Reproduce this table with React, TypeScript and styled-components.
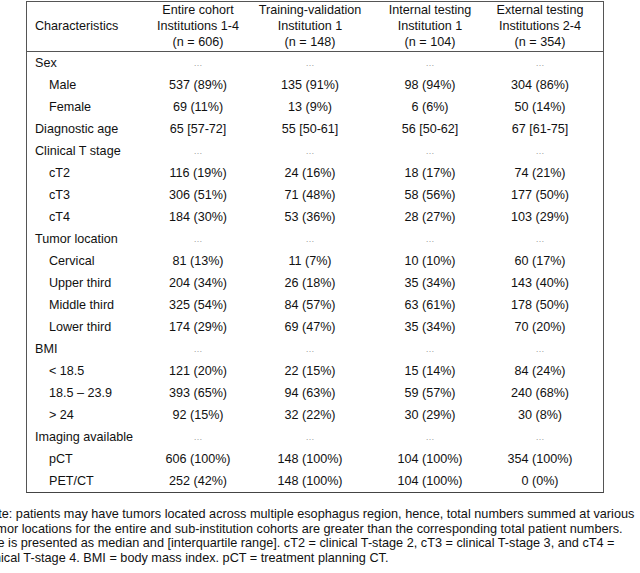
import React from 'react';
import styled, { createGlobalStyle } from 'styled-components';

const GlobalStyle = createGlobalStyle`
  html, body {
    margin: 0;
    padding: 0;
    background: #ffffff;
    overflow: hidden;
  }
  body {
    font-family: "Liberation Sans", Arial, sans-serif;
    color: #111;
  }
`;

interface RowData {
  label: string;
  sub?: boolean;
  values?: string[];
}

const rows: RowData[] = [
  { label: 'Sex' },
  { label: 'Male', sub: true, values: ['537 (89%)', '135 (91%)', '98 (94%)', '304 (86%)'] },
  { label: 'Female', sub: true, values: ['69 (11%)', '13 (9%)', '6 (6%)', '50 (14%)'] },
  { label: 'Diagnostic age', values: ['65 [57-72]', '55 [50-61]', '56 [50-62]', '67 [61-75]'] },
  { label: 'Clinical T stage' },
  { label: 'cT2', sub: true, values: ['116 (19%)', '24 (16%)', '18 (17%)', '74 (21%)'] },
  { label: 'cT3', sub: true, values: ['306 (51%)', '71 (48%)', '58 (56%)', '177 (50%)'] },
  { label: 'cT4', sub: true, values: ['184 (30%)', '53 (36%)', '28 (27%)', '103 (29%)'] },
  { label: 'Tumor location' },
  { label: 'Cervical', sub: true, values: ['81 (13%)', '11 (7%)', '10 (10%)', '60 (17%)'] },
  { label: 'Upper third', sub: true, values: ['204 (34%)', '26 (18%)', '35 (34%)', '143 (40%)'] },
  { label: 'Middle third', sub: true, values: ['325 (54%)', '84 (57%)', '63 (61%)', '178 (50%)'] },
  { label: 'Lower third', sub: true, values: ['174 (29%)', '69 (47%)', '35 (34%)', '70 (20%)'] },
  { label: 'BMI' },
  { label: '< 18.5', sub: true, values: ['121 (20%)', '22 (15%)', '15 (14%)', '84 (24%)'] },
  { label: '18.5 – 23.9', sub: true, values: ['393 (65%)', '94 (63%)', '59 (57%)', '240 (68%)'] },
  { label: '> 24', sub: true, values: ['92 (15%)', '32 (22%)', '30 (29%)', '30 (8%)'] },
  { label: 'Imaging available' },
  { label: 'pCT', sub: true, values: ['606 (100%)', '148 (100%)', '104 (100%)', '354 (100%)'] },
  { label: 'PET/CT', sub: true, values: ['252 (42%)', '148 (100%)', '104 (100%)', '0 (0%)'] },
];

const headers = [
  ['Entire cohort', 'Institutions 1-4', '(n = 606)'],
  ['Training-validation', 'Institution 1', '(n = 148)'],
  ['Internal testing', 'Institution 1', '(n = 104)'],
  ['External testing', 'Institutions 2-4', '(n = 354)'],
];

const notes = [
  'Note: patients may have tumors located across multiple esophagus region, hence, total numbers summed at various',
  'Tumor locations for the entire and sub-institution cohorts are greater than the corresponding total patient numbers.',
  'Age is presented as median and [interquartile range]. cT2 = clinical T-stage 2, cT3 = clinical T-stage 3, and cT4 =',
  'clinical T-stage 4. BMI = body mass index. pCT = treatment planning CT.',
];

export default function App() {
  return (
    <Page>
      <GlobalStyle />
      <Table>
        <HeaderRow>
          <HeaderLabel>Characteristics</HeaderLabel>
          {headers.map((h, i) => (
            <HeaderCell key={i}>
              {h.map((line) => (
                <span key={line}>{line}</span>
              ))}
            </HeaderCell>
          ))}
        </HeaderRow>
        {rows.map((r) => (
          <Row key={r.label}>
            <Label $sub={!!r.sub}>{r.label}</Label>
            {r.values
              ? r.values.map((v, i) => <Cell key={i}>{v}</Cell>)
              : [0, 1, 2, 3].map((i) => (
                  <Cell key={i}>
                    <Dots>…</Dots>
                  </Cell>
                ))}
          </Row>
        ))}
      </Table>
      <Note>
        {notes.map((n) => (
          <NoteLine key={n}>{n}</NoteLine>
        ))}
      </Note>
    </Page>
  );
}

const Page = styled.div`
  width: 640px;
  height: 573px;
  padding-top: 1px;
  box-sizing: border-box;
  overflow: hidden;
`;

const Table = styled.div`
  margin-left: 26px;
  width: 578px;
  box-sizing: border-box;
  border: 1px solid #555;
  border-bottom-color: #444;
  font-size: 12.6px;
`;

const cols = `113px 116px 108px 132px 88px 1fr`;

const HeaderRow = styled.div`
  display: grid;
  grid-template-columns: ${cols};
  border-bottom: 1px solid #555;
  padding-bottom: 1px;
`;

const HeaderLabel = styled.div`
  display: flex;
  align-items: center;
  padding-left: 8px;
  white-space: nowrap;
`;

const HeaderCell = styled.div`
  display: flex;
  flex-direction: column;
  align-items: center;
  line-height: 16px;
  white-space: nowrap;
`;

const Row = styled.div`
  display: grid;
  grid-template-columns: ${cols};
  height: 22px;
  align-items: center;
`;

const Label = styled.div<{ $sub: boolean }>`
  padding-left: ${(p) => (p.$sub ? '22px' : '8px')};
  white-space: nowrap;
`;

const Cell = styled.div`
  display: flex;
  justify-content: center;
  white-space: nowrap;
`;

const Dots = styled.span`
  color: #a0a0a0;
  font-size: 9px;
`;

const Note = styled.div`
  margin-left: -18px;
  margin-top: 14px;
  font-size: 12.7px;
  line-height: 14.7px;
`;

const NoteLine = styled.div`
  white-space: nowrap;
`;
